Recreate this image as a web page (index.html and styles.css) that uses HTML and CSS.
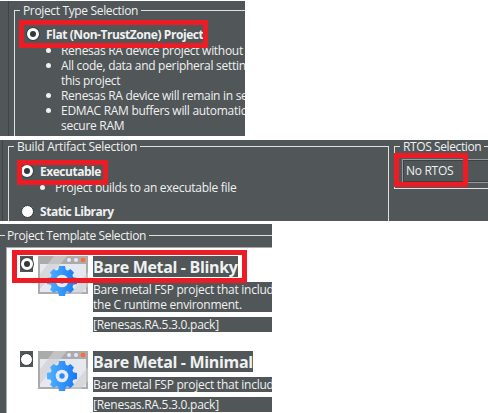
FILE: index.html
```html
<!DOCTYPE html>
<html lang="en">
<head>
<meta charset="utf-8">
<title>Project Selection</title>
<link rel="stylesheet" href="styles.css">
</head>
<body>
<svg class="defs" aria-hidden="true">
  <defs>
    <linearGradient id="blue" gradientUnits="userSpaceOnUse" x1="9" y1="0" x2="39" y2="0"><stop offset="0" stop-color="#51b2ff"/><stop offset="1" stop-color="#1679f3"/></linearGradient>
    <symbol id="template" viewBox="0 0 50 40">
      <path fill="#ababab" d="M0 0h50v38H0z"/>
      <path fill="#e6e7f0" d="M2 8h46v28H2z"/>
      <path fill="#cfcfcf" opacity=".65" d="M16 0h13L2 33v-15zM50 16v14l-7 8H32z"/>
      <circle cx="31" cy="4" r="2" fill="#e8e8f2"/><circle cx="38" cy="4" r="2" fill="#e8e8f2"/><circle cx="45" cy="4" r="2.3" fill="#ff6b35"/>
      <g fill="url(#blue)">
        <circle cx="24" cy="25" r="11.800"/>
        <g id="teeth">
          <path d="M21 10h6l1 5h-8zM21 40h6l1-5h-8zM9 22v6l5 1v-8zM39 22v6l-5 1v-8z"/>
          <path d="M12 16.500l3.500-3.500 5 3-5.500 5.500zM36 16.500l-3.500-3.500-5 3 5.500 5.500zM12 33.500l3.500 3.500 5-3-5.500-5.500zM36 33.500l-3.500 3.500-5-3 5.500-5.500z"/>
        </g>
      </g>
      <circle cx="24" cy="25" r="6.300" fill="#e8eaf6"/>
      <circle cx="24" cy="25" r="2.700" fill="#278df8"/>
    </symbol>
  </defs>
</svg>

<section class="panel type">
  <fieldset class="group">
    <legend>Project Type Selection</legend>
    <div class="choice"><i class="radio on"></i><b>Flat (Non-TrustZone) Project</b></div>
    <ul>
      <li>Renesas RA device project without</li>
      <li>All code, data and peripheral settin<br>this project</li>
      <li>Renesas RA device will remain in se</li>
      <li>EDMAC RAM buffers will automatic<br>secure RAM</li>
    </ul>
  </fieldset>
  <div class="mark m1"></div>
</section>

<section class="panel build">
  <fieldset class="group artifact">
    <legend>Build Artifact Selection</legend>
    <div class="choice"><i class="radio on"></i><b>Executable</b></div>
    <ul><li>Project builds to an executable file</li></ul>
    <div class="choice"><i class="radio"></i><b>Static Library</b></div>
  </fieldset>
  <fieldset class="group rtos">
    <legend>RTOS Selection</legend>
    <div class="combo">No RTOS</div>
  </fieldset>
  <div class="mark m2"></div>
  <div class="mark m3"></div>
</section>

<section class="panel template">
  <header><span>Project Template Selection</span></header>
  <div class="list">
    <article>
      <div class="cell"><i class="radio on"></i></div>
      <svg class="icon"><use href="#template"/></svg>
      <div class="info">
        <h2>Bare Metal - Blinky</h2>
        <p>Bare metal FSP project that includ<br>the C runtime environment.</p>
        <p>[Renesas.RA.5.3.0.pack]</p>
      </div>
    </article>
    <article>
      <div class="cell"><i class="radio"></i></div>
      <svg class="icon"><use href="#template"/></svg>
      <div class="info">
        <h2>Bare Metal - Minimal</h2>
        <p>Bare metal FSP project that includ</p>
        <p>[Renesas.RA.5.3.0.pack]</p>
      </div>
    </article>
  </div>
  <div class="mark m4"></div>
</section>
</body>
</html>
```
FILE: styles.css
```css
* { box-sizing: border-box; }
body {
  margin: 0;
  padding-top: 1px;
  width: 488px;
  height: 413px;
  overflow: hidden;
  background: #fff;
  color: #f0f1f1;
  font: 12px/15px "Open Sans", "Noto Sans", sans-serif;
  letter-spacing: -.29px;
  white-space: nowrap;
}
.defs { position: absolute; width: 0; height: 0; }
.panel { position: relative; overflow: hidden; background: #515658; }
.type { width: 245px; height: 135px; padding: 9px 0 0 8px; }
.type::before, .build::before { content: ""; position: absolute; left: 8px; top: 0; width: 1px; height: 100%; background: #404446; }
.type .group { width: 260px; height: 140px; margin-left: 6px; }
.group { flex: none; min-width: 0; margin: 0; padding: 0; border: 1px solid #dfe0e0; }
legend { height: 1px; line-height: 1px; margin-left: 5px; padding: 0 3px; }
.type legend { letter-spacing: -.35px; }
.choice { display: flex; align-items: center; height: 16px; }
.choice b { margin-left: 6px; letter-spacing: -.47px; }
.type .choice b { letter-spacing: -.43px; }
.type .choice { margin: 15px 0 0 12px; }
.radio { flex: none; width: 13px; height: 13px; border-radius: 50%; background: #fff; border: 1px solid #34393b; }
.radio.on { width: 12px; height: 12px; background: #333839; border: 3px solid #fff; box-shadow: 0 0 0 1px #3d4143; }
.choice .radio.on + b { margin-left: 7px; }
ul { list-style: none; margin: 0; padding: 0; }
li { position: relative; }
li::before { content: ""; position: absolute; left: -15px; top: 5px; width: 5px; height: 5px; border-radius: 50%; background: #f0f1f1; }
.type ul { margin: 1px 0 0 46px; }
.build { display: flex; width: 488px; height: 81px; margin-top: 4px; padding: 6px 0 0 8px; }
.build::before { left: 2px; }
.artifact { width: 381px; height: 90px; }
.artifact legend { letter-spacing: -.25px; }
.artifact .choice { margin: 16px 0 0 12px; }
.artifact ul { margin: 1px 0 0 46px; }
.artifact ul + .choice { margin-top: 8px; }
.rtos { width: 110px; height: 43px; margin-left: 5px; }
.combo { width: 110px; height: 24px; margin: 12px 0 0 7px; padding: 3px 0 0 3px; border: 1px solid #999; outline: 1px solid #3d4143; outline-offset: -2px; letter-spacing: -.3px; }
.rtos legend { letter-spacing: -.4px; }
.template { width: 272px; height: 189px; margin-top: 3px; }
header { display: flex; align-items: center; height: 22px; }
header::before { content: ""; width: 5px; height: 1px; background: #dfe0e0; }
header::after { content: ""; flex: 1; height: 1px; background: #dfe0e0; }
header span { margin: 0 3px 0 2px; letter-spacing: -.37px; }
.list { height: 170px; margin: 1px 0 0 6px; padding: 8px 0 0 13px; border: solid #aaa; border-width: 1px 0 0 1px; background: #fff; }
article { display: flex; align-items: flex-start; height: 95px; }
.cell { display: grid; place-items: center; width: 13px; height: 16px; background: #515658; }
.icon { width: 50px; height: 40px; margin-left: 5px; }
.info { flex: 1; margin-left: 5px; overflow: hidden; }
h2 { width: max-content; height: 21px; margin: 0; background: #515658; font-size: 16px; line-height: 22px; letter-spacing: -.33px; }
p { margin: 5px 0 0; background: #515658; overflow: hidden; letter-spacing: -.25px; }
.mark { position: absolute; border: 5px solid #ed1c24; }
.m1 { left: 19px; top: 19px; width: 189px; height: 28px; }
.m2 { left: 17px; top: 20px; width: 91px; height: 25px; }
.m3 { left: 394px; top: 13px; width: 74px; height: 34px; }
.m4 { left: 12px; top: 26px; width: 235px; height: 33px; }
```
